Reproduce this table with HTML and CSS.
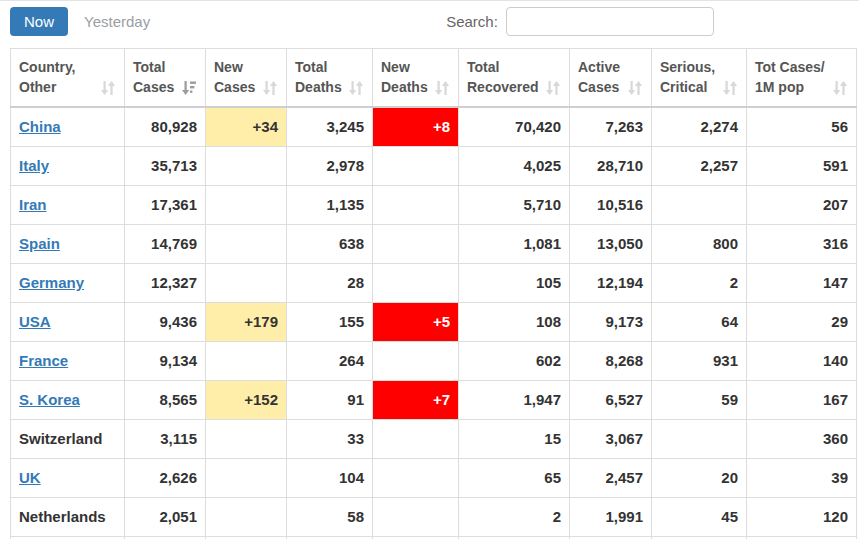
FILE: index.html
```html
<!DOCTYPE html>
<html>
<head>
<meta charset="utf-8">
<link rel="stylesheet" href="styles.css">
</head>
<body>
<div class="page">
  <div class="topbar">
    <ul class="pills">
      <li class="pill active">Now</li>
      <li class="pill">Yesterday</li>
    </ul>
    <label class="search">Search: <input type="text" class="search-input"></label>
  </div>
  <table class="stats">
    <colgroup>
      <col class="c1"><col class="c2"><col class="c3"><col class="c4"><col class="c5"><col class="c6"><col class="c7"><col class="c8"><col class="c9">
    </colgroup>
    <thead>
      <tr>
        <th>Country,<br>Other<span class="sort"></span></th>
        <th>Total<br>Cases<span class="sort desc"></span></th>
        <th>New<br>Cases<span class="sort"></span></th>
        <th>Total<br>Deaths<span class="sort"></span></th>
        <th>New<br>Deaths<span class="sort"></span></th>
        <th>Total<br>Recovered<span class="sort"></span></th>
        <th>Active<br>Cases<span class="sort"></span></th>
        <th>Serious,<br>Critical<span class="sort"></span></th>
        <th>Tot&nbsp;Cases/<br>1M pop<span class="sort"></span></th>
      </tr>
    </thead>
    <tbody id="rows"></tbody>
  </table>
</div>
<script src="app.js"></script>
</body>
</html>
```

FILE: app.js
```js
var data = [
  ["China", 1, "80,928", "+34", "3,245", "+8", "70,420", "7,263", "2,274", "56"],
  ["Italy", 1, "35,713", "", "2,978", "", "4,025", "28,710", "2,257", "591"],
  ["Iran", 1, "17,361", "", "1,135", "", "5,710", "10,516", "", "207"],
  ["Spain", 1, "14,769", "", "638", "", "1,081", "13,050", "800", "316"],
  ["Germany", 1, "12,327", "", "28", "", "105", "12,194", "2", "147"],
  ["USA", 1, "9,436", "+179", "155", "+5", "108", "9,173", "64", "29"],
  ["France", 1, "9,134", "", "264", "", "602", "8,268", "931", "140"],
  ["S. Korea", 1, "8,565", "+152", "91", "+7", "1,947", "6,527", "59", "167"],
  ["Switzerland", 0, "3,115", "", "33", "", "15", "3,067", "", "360"],
  ["UK", 1, "2,626", "", "104", "", "65", "2,457", "20", "39"],
  ["Netherlands", 0, "2,051", "", "58", "", "2", "1,991", "45", "120"],
  ["", 0, "", "", "", "", "", "", "", ""]
];
var downArrow = '<rect x="2.5" y="1" width="2.2" height="10"/><polygon points="0,10 7.2,10 3.6,15"/>';
var upArrow = '<rect x="9.4" y="5" width="2.2" height="10"/><polygon points="6.9,6 14.1,6 10.5,1"/>';
var bars = '<rect x="8" y="1.5" width="6" height="2.4"/><rect x="8" y="6" width="4.4" height="2.4"/><rect x="8" y="10.5" width="2.4" height="2.4"/>';
document.querySelectorAll('.sort').forEach(function (s) {
  var inner = s.classList.contains('desc') ? downArrow + bars : downArrow + upArrow;
  s.innerHTML = '<svg width="14" height="16" viewBox="0 0 14 16">' + inner + '</svg>';
});
var tb = document.getElementById('rows');
var html = '';
data.forEach(function (r) {
  html += '<tr>';
  html += '<td class="country">' + (r[1] ? '<a href="#" class="clink">' + r[0] + '</a>' : r[0]) + '</td>';
  for (var i = 2; i < r.length; i++) {
    var cls = 'num';
    if (i === 3 && r[i]) cls += ' newcases';
    if (i === 5 && r[i]) cls += ' newdeaths';
    html += '<td class="' + cls + '">' + r[i] + '</td>';
  }
  html += '</tr>';
});
tb.innerHTML = html;
```

FILE: styles.css
```css
html, body {
  margin: 0;
  padding: 0;
  background: #fff;
}
body {
  font-family: "Liberation Sans", Arial, sans-serif;
  color: #333;
}
.page {
  border-top: 1px solid #e3e3e3;
  padding: 6px 0 0 10px;
}
.topbar {
  display: flex;
  align-items: center;
  height: 29px;
  margin-bottom: 12px;
}
.pills {
  list-style: none;
  margin: 0;
  padding: 0;
  display: flex;
  gap: 2px;
}
.pill {
  font-size: 15px;
  line-height: 29px;
  padding: 0 14px;
  border-radius: 4px;
  color: #9a9ea4;
}
.pill.active {
  background: #337ab7;
  color: #fff;
  padding: 0 14px 0 14px;
  width: 30px;
}
.search {
  margin-left: 282px;
  font-size: 15px;
  color: #666;
  display: flex;
  align-items: center;
  gap: 8px;
}
.search-input {
  width: 208px;
  box-sizing: border-box;
  height: 29px;
  border: 1px solid #ccc;
  border-radius: 4px;
  padding: 0 6px;
  margin: 0;
}
.stats {
  border-collapse: collapse;
  table-layout: fixed;
  width: 846px;
  border-left: 1px solid #ddd;
  border-right: 1px solid #ddd;
  border-top: 1px solid #ddd;
}
.c1 { width: 114px; }
.c2 { width: 81px; }
.c3 { width: 81px; }
.c4 { width: 86px; }
.c5 { width: 86px; }
.c6 { width: 111px; }
.c7 { width: 82px; }
.c8 { width: 95px; }
.c9 { width: 110px; }
.stats th {
  position: relative;
  text-align: left;
  vertical-align: bottom;
  font-size: 14px;
  line-height: 20px;
  font-weight: bold;
  color: #555;
  padding: 8px 8px 9px 8px;
  border-left: 1px solid #ddd;
  border-right: 1px solid #ddd;
  border-bottom: 2px solid #cfcfcf;
}
.sort {
  position: absolute;
  right: 9px;
  bottom: 10px;
  width: 14px;
  height: 16px;
  fill: #d8d8d8;
}
.sort.desc {
  fill: #9c9c9c;
}
.sort svg {
  display: block;
}
.stats td {
  font-size: 15px;
  font-weight: bold;
  line-height: 22px;
  height: 22px;
  padding: 8px 8px;
  border: 1px solid #ddd;
  color: #333;
  white-space: nowrap;
}
.stats td.num {
  text-align: right;
}
.clink {
  color: #337ab7;
  text-decoration: underline;
}
.newcases {
  background: #ffeeaa;
}
.stats td.newdeaths {
  background: #ff0000;
  color: #fff;
}
```
